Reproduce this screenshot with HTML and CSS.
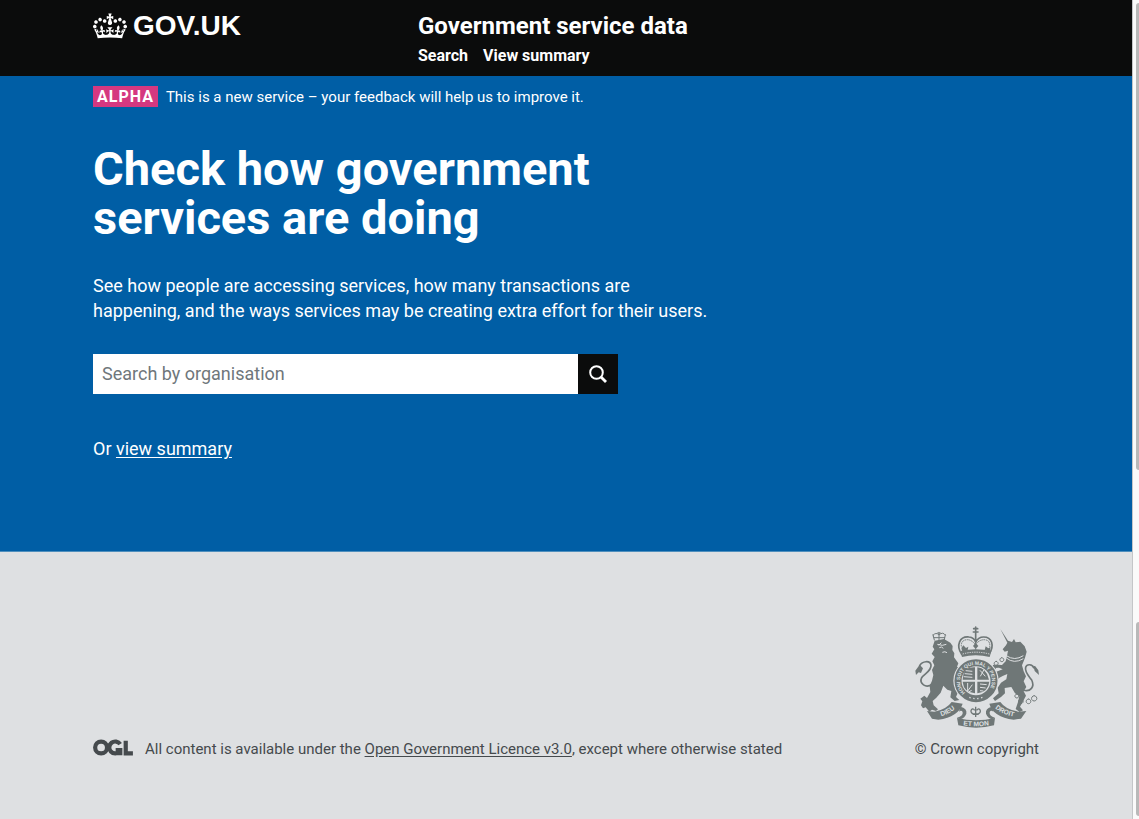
FILE: index.html
```html
<!DOCTYPE html>
<html lang="en">
<head>
<meta charset="utf-8">
<meta name="viewport" content="width=device-width, initial-scale=1">
<title>Government service data</title>
<link rel="stylesheet" href="styles.css">
</head>
<body>
<div class="page">
  <header class="header">
    <div class="container header-row">
      <a class="logo" href="#">
        <svg class="crown" viewBox="0 0 132 97" aria-hidden="true"><path fill="currentColor" d="M25 30.2c3.5 1.5 7.7-.2 9.1-3.7 1.5-3.6-.2-7.8-3.9-9.2-3.6-1.4-7.6.3-9.1 3.9-1.4 3.5.3 7.5 3.9 9zM9 39.5c3.6 1.5 7.8-.2 9.2-3.7 1.5-3.6-.2-7.8-3.9-9.1-3.6-1.5-7.6.2-9.1 3.8-1.4 3.5.3 7.5 3.8 9zM4.4 57.2c3.5 1.5 7.7-.2 9.1-3.8 1.5-3.6-.2-7.7-3.9-9.1-3.5-1.5-7.6.3-9.1 3.8-1.4 3.5.3 7.6 3.9 9.1zm38.3-21.4c3.5 1.5 7.7-.2 9.1-3.8 1.5-3.6-.2-7.7-3.9-9.1-3.6-1.5-7.6.3-9.1 3.8-1.3 3.6.4 7.7 3.9 9.1zm64.4-5.6c-3.6 1.5-7.8-.2-9.1-3.7-1.5-3.6.2-7.8 3.8-9.2 3.6-1.4 7.7.3 9.2 3.9 1.3 3.5-.4 7.5-3.9 9zm15.9 9.3c-3.6 1.5-7.7-.2-9.1-3.7-1.5-3.6.2-7.8 3.7-9.1 3.6-1.5 7.7.2 9.2 3.8 1.5 3.5-.3 7.5-3.8 9zm4.7 17.7c-3.6 1.5-7.8-.2-9.2-3.8-1.5-3.6.2-7.7 3.9-9.1 3.6-1.5 7.7.3 9.2 3.8 1.3 3.5-.4 7.6-3.9 9.1zM89.3 35.8c-3.6 1.5-7.8-.2-9.2-3.8-1.4-3.6.2-7.7 3.9-9.1 3.6-1.5 7.7.3 9.2 3.8 1.4 3.6-.3 7.7-3.9 9.1zM69.7 17.7l8.9 4.7V9.3l-8.9 2.8c-.2-.3-.5-.6-.9-.9L72.4 0H59.6l3.5 11.2c-.3.3-.6.5-.9.9l-8.8-2.8v13.1l8.8-4.7c.3.3.6.7.9.9l-5 15.4v.1c-.2.8-.4 1.6-.4 2.4 0 4.1 3.1 7.5 7 8.1h.2c.3 0 .7.1 1 .1.4 0 .7 0 1-.1h.2c4-.6 7.1-4.1 7.1-8.1 0-.8-.1-1.7-.4-2.4V34l-5.1-15.4c.4-.2.7-.6 1-.9zM66 92.8c16.9 0 32.8 1.1 47.1 3.2 4-16.9 8.9-26.7 14-33.5l-9.6-3.4c1 4.9 1.1 7.2 0 10.2-1.5-1.4-3-4.3-4.2-8.7L108.6 76c2.8-2 5-3.2 7.5-3.3-4.4 9.4-10 11.9-13.6 11.2-4.3-.8-6.3-4.6-5.6-7.9 1-4.7 5.7-5.9 8-.5 4.3-8.7-3-11.4-7.6-8.8 7.1-7.2 7.9-13.5 2.1-21.1-8 6.1-8.1 12.3-4.5 20.8-4.7-5.4-12.1-2.5-9.5 6.2 3.4-5.2 7.9-2 7.2 3.1-.6 4.3-6.4 7.8-13.5 7.2-10.3-.9-10.9-8-11.2-13.8 2.5-.5 7.1 1.8 11 7.3L80.2 60c-4.1 4.4-8 5.3-12.3 5.4 1.4-4.4 8-11.6 8-11.6H55.5s6.4 7.2 7.9 11.6c-4.2-.1-8-1-12.3-5.4l1.4 16.4c3.9-5.5 8.5-7.7 10.9-7.3-.3 5.8-.9 12.8-11.1 13.8-7.2.6-12.9-2.9-13.5-7.2-.7-5 3.8-8.3 7.1-3.1 2.7-8.7-4.6-11.6-9.4-6.2 3.7-8.5 3.6-14.7-4.6-20.8-5.8 7.6-5 13.9 2.2 21.1-4.7-2.6-11.9.1-7.7 8.8 2.3-5.5 7.1-4.2 8.1.5.7 3.3-1.3 7.1-5.7 7.9-3.5.7-9-1.8-13.5-11.2 2.5.1 4.7 1.3 7.5 3.3l-4.7-15.4c-1.2 4.4-2.7 7.2-4.3 8.7-1.1-3-.9-5.3 0-10.2l-9.5 3.4c5 6.9 9.9 16.7 14 33.5 14.8-2.1 30.8-3.2 47.7-3.2z"/></svg>
        <span>GOV.UK</span>
      </a>
      <div class="header-content">
        <a class="service-name" href="#">Government service data</a>
        <nav class="nav" aria-label="Main">
          <a href="#">Search</a>
          <a href="#">View summary</a>
        </nav>
      </div>
    </div>
  </header>

  <main class="hero">
    <div class="container">
      <p class="phase"><strong class="tag">ALPHA</strong><span>This is a new service – your feedback will help us to improve it.</span></p>
      <h1 class="title">Check how government services are doing</h1>
      <p class="lead">See how people are accessing services, how many transactions are happening, and the ways services may be creating extra effort for their users.</p>
      <form class="search" role="search">
        <input class="search-input" type="search" aria-label="Search by organisation" placeholder="Search by organisation">
        <button class="search-button" type="button" aria-label="Search">
          <svg class="search-icon" viewBox="0 0 18 18" fill="none" stroke="currentColor" aria-hidden="true"><circle cx="7.5" cy="7.5" r="6.3" stroke-width="2"/><path d="M12 12l5 5" stroke-width="2.8"/></svg>
        </button>
      </form>
      <p class="alternative">Or <a href="#">view summary</a></p>
    </div>
  </main>

  <footer class="footer">
    <div class="container footer-row">
      <div class="licence">
        <svg class="ogl" viewBox="0 0 484 196" fill="none" stroke="currentColor" stroke-width="51" role="img" aria-label="Open Government Licence"><circle cx="98" cy="98" r="72"/><path d="M329 58A72 72 0 1 0 322 146M274 131h56v62M396 16v152h87"/></svg>
        <span>All content is available under the <a href="#">Open Government Licence v3.0</a>, except where otherwise stated</span>
      </div>
      <a class="copyright" href="#">
        <svg class="crest" viewBox="48 34 372 304" aria-hidden="true">
          <defs>
            <path id="garter" d="M199 233A48 48 0 1 1 263 233"/>
            <path id="scroll-left" d="M116 306Q150 300 176 274"/>
            <path id="scroll-mid" d="M180 329Q231 338 283 329"/>
            <path id="scroll-right" d="M282 274Q308 300 352 306"/>
          </defs>
          <g fill="none" stroke="#6f7777" stroke-linecap="round" stroke-linejoin="round">
            <path stroke-width="5" d="M100 207C80 222 60 205 68 188C76 176 98 168 96 150C93 135 70 138 62 152"/>
            <path stroke-width="5" d="M372 225C395 232 408 215 398 195C388 182 376 170 380 157C384 145 400 148 404 158"/>
            <path stroke-width="3" d="M106 75L102 59M136 74L139 59M102 61Q111 50 120 60Q131 49 139 60M120 75V52M116 54h8M105 68h32"/>
            <path stroke-width="5" d="M188 118C170 91 182 63 210 66C222 67 228 75 230 82C234 73 242 66 254 66C278 66 288 91 270 118M230 62V79M224 41h12M230 36v26M223 51h14"/>
            <path stroke-width="3" stroke-dasharray="2 4" d="M187 93Q186 74 207 74Q220 76 230 90Q238 75 255 74Q275 75 272 96M230 80V110"/>
            <path stroke-width="3" d="M308 128a6 6 0 1 0 1 0M291 139a6 6 0 1 0 1 0M284 151a6 6 0 1 0 1 0M353 237a6 6 0 1 0 1 0M365 252a7 7 0 1 0 1 0M388 252a7 7 0 1 0 1 0M405 242a8 8 0 1 0 1 0"/>
          </g>
          <g fill="#6f7777">
            <path d="M62 149L49 167L51 180L59 172L66 174L72 160ZM403 152L407 168L420 180L418 166L409 154Z"/>
            <path d="M107 77L135 72L154 83L161 93L160 105L166 115L165 127L178 145L174 155L188 161L182 171L173 168L178 184L173 193L179 204L169 218L177 232L171 246L181 255L167 258L154 247L157 228L145 224L133 212L125 233L112 248L101 258L104 271L117 283L111 288L99 284L91 290L80 277L72 280L66 271L70 259L64 251L76 242L84 249L94 231L92 213L99 197L103 180L99 165L106 151L100 139L107 126L98 116L106 103L101 95Z"/>
            <path d="M304 42L327 77L339 81L345 72L350 82L364 80L377 94L383 110L378 128L373 141L369 151L374 169L381 184L374 199L382 216L374 229L381 242L371 261L363 275L372 286L362 291L350 282L357 261L361 243L348 235L337 216L317 219L318 235L306 246L288 258L282 250L299 235L296 218L306 203L322 193L325 177L311 183L300 189L290 200L296 186L286 178L279 172L283 166L292 170L311 163L300 158L283 159L281 153L292 149L309 150L320 139L324 123L327 107L317 110L311 103L321 91L325 83Z"/>
            <path d="M193 91l8 8 7-4-2 11-15 7-4-14ZM230 83l8 10-8 9-8-9ZM260 94l8 6 7-4-3 15-15-6Z"/>
            <path d="M184 108Q230 97 277 108L272 126Q230 115 189 126Z"/>
            <path d="M84 288L106 290Q142 284 158 261L191 266Q178 306 118 314L99 311ZM382 288L358 290Q320 284 304 261L271 266Q282 306 344 314L366 311ZM174 309Q231 323 288 309L285 331Q231 345 178 331Z"/>
            <path d="M174 308Q193 304 191 291Q187 284 180 290L184 275Q205 280 202 296Q198 308 184 313ZM288 308Q270 304 272 291Q276 284 283 290L279 275Q258 280 261 296Q265 308 279 313Z"/>
          </g>
          <circle cx="231" cy="197" r="68" fill="#dee0e2"/>
          <circle cx="231" cy="197" r="54" fill="none" stroke="#6f7777" stroke-width="21"/>
          <path fill="#6f7777" d="M199 164q12-8 29-7v37h-37q0-18 8-30M235 157q27 1 35 37h-35ZM191 200h37v35q-34-2-37-35M235 200h36q-4 32-36 35Z"/>
          <g fill="none" stroke="#dee0e2" stroke-width="3">
            <path d="M200 167l20 2m-23 7 23 2m-26 7 26 2M243 166l16 18m-4-20-11 20M206 204v24l14-19m-11 22 9-5M243 207l20 2m-20 8 17 2m-17 8 10 1"/>
            <path d="M115 88l15 3 12-3M121 98q7-5 12 2M130 112q8-4 14 1M322 129q23 19 51 2M322 122q25 17 51 0M127 83l-8 8"/>
            <path stroke-dasharray="4 3" d="M191 117Q230 106 271 117"/>
            <path stroke-width="4" stroke-dasharray="4 8" d="M211 247q20 8 40 0"/>
          </g>
          <path fill="none" stroke="#6f7777" stroke-width="4" d="M230 275v31M221 298h18M230 297c-24 1-12-25-3-11M230 297c24 1 12-25 3-11"/>
          <g class="motto">
            <text class="motto-ring"><textPath href="#garter">HONI SOIT QUI MAL Y PENSE</textPath></text>
            <text><textPath href="#scroll-left" startOffset="50%">DIEU</textPath></text>
            <text><textPath href="#scroll-mid" startOffset="50%">ET MON</textPath></text>
            <text><textPath href="#scroll-right" startOffset="50%">DROIT</textPath></text>
          </g>
        </svg>
        <span>© Crown copyright</span>
      </a>
    </div>
  </footer>
</div>
<div class="rail" aria-hidden="true">
  <div class="rail-upper"><span class="thumb"></span></div>
  <div class="rail-lower"><span class="thumb"></span></div>
</div>
</body>
</html>
```

FILE: styles.css
```css
* { box-sizing: border-box; }

body {
  display: flex;
  min-height: 100vh;
  margin: 0;
  background: #fafafa;
  color: #fff;
  font-family: Roboto, "Liberation Sans", sans-serif;
  font-size: 15px;
  line-height: 20px;
}

a {
  color: inherit;
  text-underline-offset: 2px;
}
p, h1 { margin: 0; }

.page {
  display: flex;
  flex: 1;
  flex-direction: column;
  min-width: 0;
  border-right: 1px solid #c4c6c8;
}

.container {
  width: 100%;
  max-width: 978px;
  margin: 0 auto;
  padding: 0 16px;
}

.header {
  padding: 10px 0;
  background: #0b0c0c;
  font-size: 16px;
  font-weight: 700;
}
.header a { text-decoration: none; }
.header-row { display: flex; }
.logo {
  display: flex;
  flex: 0 0 325px;
  align-items: center;
  align-self: flex-start;
  gap: 6px;
  font-family: "Liberation Sans", Arial, sans-serif;
  font-size: 28px;
  line-height: 32px;
}
.crown { width: 34px; height: 26px; }
.service-name { font-size: 24px; line-height: 32px; }
.nav {
  display: flex;
  gap: 15px;
  padding-top: 4px;
}

.hero {
  padding: 10px 0 90px;
  border-bottom: 1px solid #4f8fbd;
  background: #005ea5;
}
.phase {
  display: flex;
  flex-wrap: wrap;
  align-items: center;
  gap: 8px;
}
.tag {
  padding: 1px 4px 0;
  background: #d53880;
  font-size: 16px;
  line-height: 20px;
  letter-spacing: 1px;
}
.title {
  max-width: 620px;
  margin: 37px 0 31px;
  font-size: 47px;
  line-height: 49px;
}
.lead {
  max-width: 620px;
  margin-bottom: 31px;
  font-size: 18px;
  line-height: 25px;
}
.search {
  display: flex;
  max-width: 525px;
  margin-bottom: 42px;
}
.search-input {
  flex: 1;
  min-width: 0;
  height: 40px;
  padding: 0 9px 2px;
  border: 0;
  border-radius: 0;
  background: #fff;
  color: #0b0c0c;
  font: inherit;
  font-size: 18px;
  appearance: none;
}
.search-input::placeholder { color: #6f777b; opacity: 1; }
.search-button {
  display: grid;
  place-items: center;
  width: 40px;
  height: 40px;
  padding: 0;
  border: 0;
  background: #0b0c0c;
  color: #fff;
}
.search-icon { width: 18px; height: 18px; }
.alternative { font-size: 18px; line-height: 25px; }

.footer {
  flex: 1;
  padding: 74px 0 60px;
  background: #dee0e2;
  color: #454a4d;
}
.footer-row {
  display: flex;
  align-items: flex-end;
  justify-content: space-between;
  gap: 24px;
}
.licence {
  display: flex;
  align-items: center;
  gap: 12px;
}
.ogl {
  flex: none;
  width: 40px;
  height: 17px;
  margin-bottom: 3px;
}
.copyright {
  display: flex;
  flex-direction: column;
  align-items: flex-end;
  gap: 11px;
  text-decoration: none;
}
.crest { width: 124px; height: 102px; overflow: visible; }
.motto {
  fill: #dee0e2;
  font-family: "Liberation Sans", Arial, sans-serif;
  font-size: 20px;
  font-weight: 700;
  text-anchor: middle;
}
.motto-ring { font-size: 15px; text-anchor: start; }

.rail {
  display: grid;
  flex: 0 0 6px;
  grid-template-rows: 619fr 200fr;
}
.rail-upper { padding: 3px 0 149px 3px; }
.rail-lower { padding: 3px 0 3px 3px; }
.thumb {
  display: block;
  height: 100%;
  border-radius: 3px 0 0 3px;
  background: #b9b9b9;
}
```
